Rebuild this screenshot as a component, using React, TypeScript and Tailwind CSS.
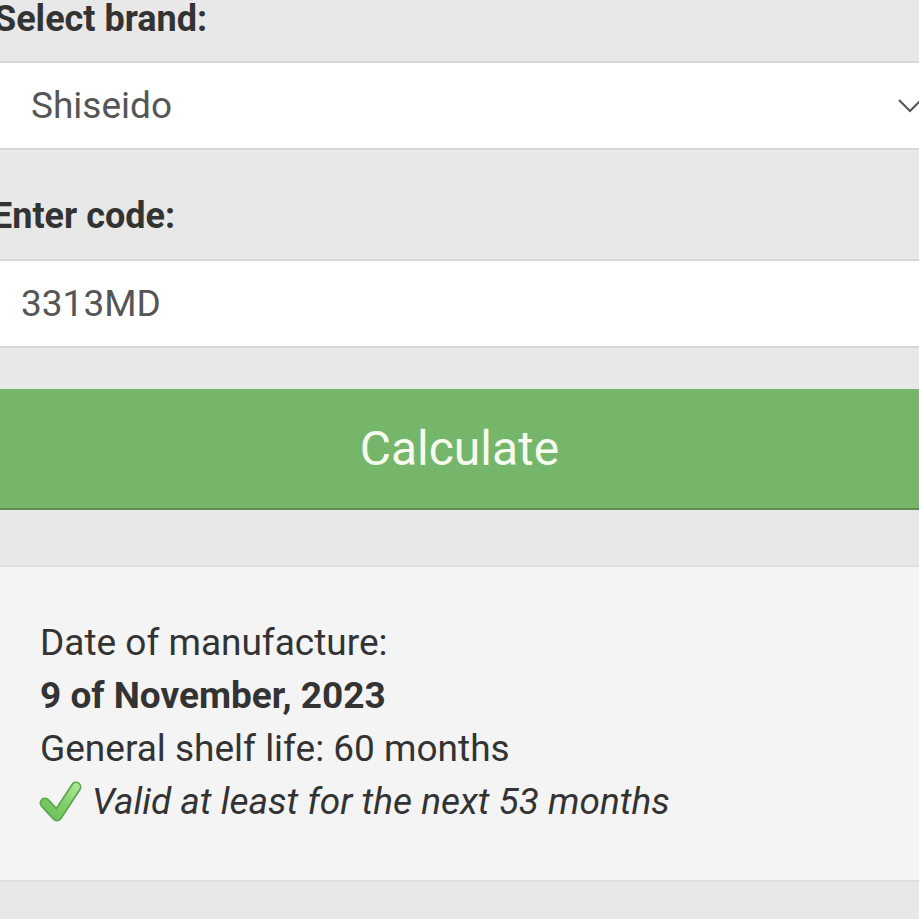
import React from "react";

function Check() {
  return (
    <svg width="44" height="44" viewBox="0 0 44 44" className="mr-[10px] shrink-0">
      <defs>
        <linearGradient id="cg" x1="1" y1="0" x2="0" y2="1">
          <stop offset="0" stopColor="#a9e78f" />
          <stop offset="0.5" stopColor="#7fcf68" />
          <stop offset="1" stopColor="#6cbf58" />
        </linearGradient>
      </defs>
      <path d="M7 23 L19 36 L38 7" fill="none" stroke="#5ea64f" strokeWidth="11" strokeLinecap="round" strokeLinejoin="round" />
      <path d="M7 23 L19 36 L38 7" fill="none" stroke="url(#cg)" strokeWidth="7.5" strokeLinecap="round" strokeLinejoin="round" />
    </svg>
  );
}

export default function App() {
  return (
    <div className="w-[919px] h-[919px] overflow-hidden bg-[#e8e8e8] font-['Roboto',sans-serif] text-[#333]">
      <div className="h-[61px] ml-[-6px] pt-[1px] text-[36px] leading-[36px] font-bold text-[#333]">Select brand:</div>
      <div className="h-[89px] bg-white border-y-2 border-[#d6d6d6] flex items-center justify-between pl-[31px]">
        <span className="text-[37px] text-[#555]">Shiseido</span>
        <svg width="24" height="14" viewBox="0 0 24 14" className="mr-[-3px]">
          <path d="M1 1 L12 12 L23 1" fill="none" stroke="#555" strokeWidth="2" />
        </svg>
      </div>
      <div className="h-[109px] ml-[-8px] pt-[48px] text-[36px] leading-[36px] font-bold text-[#333]">Enter code:</div>
      <div className="h-[89px] bg-white border-y-2 border-[#d6d6d6] flex items-center pl-[21px]">
        <span className="text-[37px] text-[#555]">3313MD</span>
      </div>
      <div className="h-[41px]" />
      <div className="h-[121px] bg-[#75b66a] border-b-2 border-[#5f8f57] flex items-center justify-center">
        <span className="text-[48px] text-[#f6fbef] font-['Roboto',sans-serif]">Calculate</span>
      </div>
      <div className="h-[55px]" />
      <div className="h-[317px] bg-[#f4f4f4] border-y-2 border-[#dedede] pl-[40px] pt-[49px] text-[37px] leading-[53px] text-[#333]">
        <div>Date of manufacture:</div>
        <div className="font-bold">9 of November, 2023</div>
        <div>General shelf life: 60 months</div>
        <div className="flex items-center italic ml-[-2px]">
          <Check />
          <span>Valid at least for the next 53 months</span>
        </div>
      </div>
    </div>
  );
}
